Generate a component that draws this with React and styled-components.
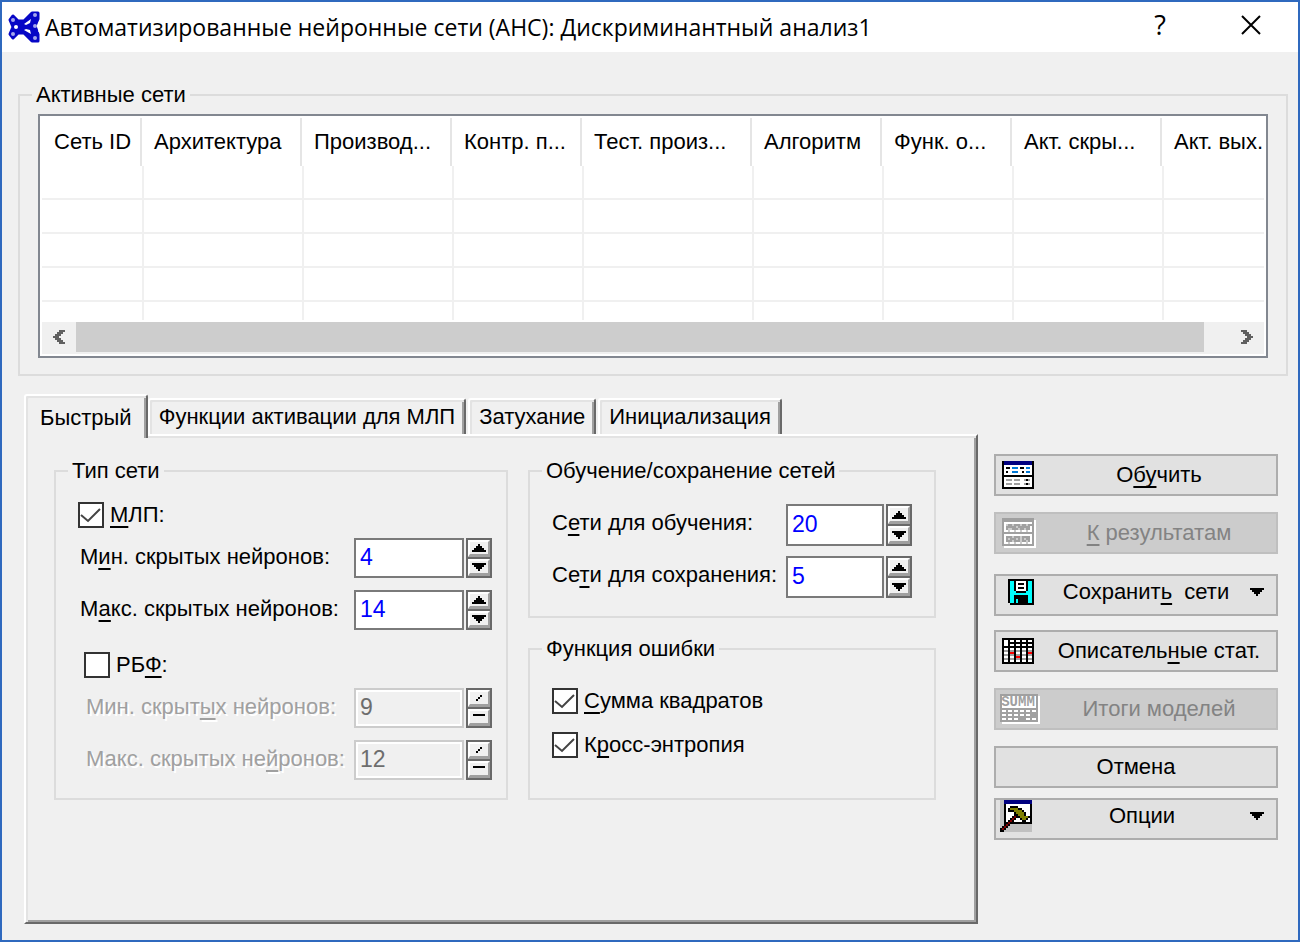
import React, { useState } from "react";
import styled, { createGlobalStyle, css } from "styled-components";

const GlobalStyle = createGlobalStyle`
  *, *::before, *::after { box-sizing: border-box; }
  body { margin: 0; background: #f0f0f0; }
  button, input { font: inherit; color: inherit; }
`;

const Window = styled.div`
  display: flex;
  flex-direction: column;
  min-height: 100vh;
  border: 2px solid #2f69be;
  background: #f0f0f0;
  color: #000;
  font: 22px/24px "Liberation Sans", Arial, sans-serif;
`;

const TitleBar = styled.header`
  display: flex;
  align-items: center;
  height: 50px;
  padding: 0 23px 0 6px;
  background: #fff;
`;

const Title = styled.h1`
  flex: 1;
  margin: 0 0 0 5px;
  font: 400 23px/32px "Open Sans", "Noto Sans", sans-serif;
  white-space: nowrap;
`;

const CaptionButton = styled.button`
  display: flex;
  align-items: center;
  justify-content: center;
  width: 48px;
  height: 48px;
  margin-left: 43px;
  padding: 0 0 4px;
  border: 0;
  background: none;
  font: 400 27px/32px "Open Sans", "Noto Sans", sans-serif;
`;

const Group = styled.fieldset`
  min-width: 0;
  margin: 0;
  padding: 0;
  border: 2px solid #dcdcdc;
`;

const Legend = styled.legend`
  margin-left: 12px;
  padding: 0 4px;
  line-height: 24px;
`;

const GroupBody = styled.div`
  padding: ${(p) => p.$pad};
`;

const Networks = styled.section`
  padding: 31px 10px 0 16px;
`;

const ListView = styled.div`
  padding: 2px;
  border: 2px solid #828790;
  background: #fff;
`;

const ListScroll = styled.div`
  height: 202px;
  overflow: hidden;
`;

const Table = styled.table`
  table-layout: fixed;
  width: 100%;
  border-spacing: 0;
`;

const HeadCell = styled.th`
  height: 48px;
  padding: 0 0 0 12px;
  border-right: 2px solid #e5e5e5;
  font-weight: 400;
  text-align: left;
  white-space: nowrap;
  &:last-child { border-right: 0; }
`;

const Cell = styled.td`
  height: 34px;
  padding: 0;
  border-bottom: 2px solid #f0f0f0;
  border-left: 2px solid #f0f0f0;
  &:first-child { border-left: 0; }
`;

const ScrollBar = styled.div`
  display: flex;
  height: 32px;
  margin-top: 2px;
  background: #f0f0f0;
`;

const ScrollArrow = styled.button`
  display: flex;
  align-items: center;
  justify-content: center;
  width: 34px;
  padding: 0 0 2px;
  border: 0;
  background: none;
`;

const Track = styled.div`
  flex: 1;
  padding: 0 26px 2px 0;
`;

const Thumb = styled.div`
  height: 100%;
  background: #cdcdcd;
`;

const Body = styled.div`
  display: flex;
  flex: 1;
  gap: 16px;
  padding: 18px 20px 16px 22px;
`;

const TabArea = styled.div`
  display: flex;
  flex: 1;
  flex-direction: column;
  min-width: 0;
`;

const bevel = css`
  border: 2px solid #fff;
  border-right-color: #696969;
  box-shadow: inset 2px 2px #e3e3e3, inset -2px 0 #a0a0a0;
`;

const TabStrip = styled.div`
  display: flex;
  align-items: flex-end;
  height: 40px;
`;

const Tab = styled.button`
  ${bevel}
  height: 36px;
  margin-right: 2px;
  padding: 0 9px;
  border-bottom: 0;
  border-radius: 3px 3px 0 0;
  background: #f0f0f0;
  white-space: nowrap;
  ${(p) => p.$active && css`
    z-index: 1;
    align-self: flex-start;
    height: 44px;
    margin-right: 0;
    padding: 2px 14px 0;
  `}
`;

const Panel = styled.div`
  display: grid;
  flex: 1;
  grid-template-columns: minmax(0, 454fr) minmax(0, 408fr);
  gap: 20px;
  align-content: start;
  padding: 23px 40px 20px 28px;
  border: 2px solid #fff;
  border-right-color: #696969;
  border-bottom-color: #696969;
  box-shadow: inset 2px 2px #e3e3e3, inset -2px -2px #a0a0a0;
`;

const Column = styled.div`
  display: flex;
  flex-direction: column;
  gap: 19px;
  & > :last-child { flex: 1; }
`;

const Stack = styled.div`
  display: flex;
  flex-direction: column;
  gap: ${(p) => p.$gap}px;
  padding-left: ${(p) => p.$indent || 0}px;
  margin-top: ${(p) => p.$top || 0}px;
`;

const Field = styled.div`
  display: flex;
  align-items: stretch;
  height: ${(p) => p.$height}px;
`;

const FieldLabel = styled.label`
  flex: 1;
  padding: 7px 0 0 2px;
  white-space: nowrap;
  ${(p) => p.$disabled && css`
    color: #a0a0a0;
    text-shadow: 2px 2px #fff;
  `}
`;

const NumberBox = styled.input`
  width: ${(p) => p.$width}px;
  padding: 0 4px 3px;
  border: 2px solid #7a7a7a;
  border-radius: 0;
  background: #fff;
  color: #00f;
  font-size: 23px;
  &:disabled {
    border-color: #ccc;
    outline: 2px solid #fff;
    outline-offset: -4px;
    background: #f0f0f0;
    color: #6d6d6d;
  }
`;

const Spinner = styled.div`
  display: flex;
  flex-direction: column;
  gap: 2px;
  width: 26px;
  margin-left: 2px;
  border: 2px solid #696969;
  background: #696969;
`;

const SpinButton = styled.button`
  display: flex;
  flex: 1;
  align-items: center;
  justify-content: center;
  min-height: 0;
  padding: 0;
  border: 2px solid #fff;
  border-right-color: #a0a0a0;
  border-bottom: 3px solid #a0a0a0;
  background: #f0f0f0;
`;

const CheckLabel = styled.label`
  display: flex;
  align-items: center;
  height: 26px;
  gap: 6px;
  white-space: nowrap;
`;

const CheckBox = styled.input`
  flex: none;
  width: 26px;
  height: 26px;
  margin: 0;
  border: 2px solid #333;
  background: #fff;
  appearance: none;
  &:checked {
    background: #fff
      url("data:image/svg+xml,%3Csvg xmlns='http://www.w3.org/2000/svg' viewBox='0 0 22 22'%3E%3Cpath d='M1 11l7 6L20 5' fill='none' stroke='%23444' stroke-width='2'/%3E%3C/svg%3E")
      center / 22px 22px no-repeat;
  }
`;

const Actions = styled.aside`
  display: flex;
  flex: none;
  flex-direction: column;
  width: 284px;
  padding-top: 60px;
`;

const ActionButton = styled.button`
  display: flex;
  align-items: center;
  height: 42px;
  margin-bottom: ${(p) => p.$after || 16}px;
  padding: 0 0 ${(p) => (p.$drop ? 6 : 0)}px;
  border: 2px solid #adadad;
  background: #e1e1e1;
  white-space: pre;
  &:disabled {
    border-color: #bfbfbf;
    background: #ccc;
    color: #838383;
  }
`;

const IconSlot = styled.span`
  display: flex;
  flex: none;
  width: ${(p) => p.$width || 46}px;
  padding-left: ${(p) => p.$left}px;
`;

const Caption = styled.span`
  flex: 1;
  text-align: center;
`;

const ArrowSlot = styled.span`
  display: flex;
  flex: none;
  width: 26px;
`;

const Hot = styled.u`
  text-decoration-thickness: 2px;
  text-underline-offset: 4px;
  text-decoration-skip-ink: none;
`;

const Drawing = styled.svg`
  display: block;
  flex: none;
`;

const palette = {
  K: "#000", W: "#fff", N: "#000080", B: "#0078d7", G: "#a0a0a0", S: "#c0c0c0",
  C: "#00ffff", R: "#ff0000", D: "#800000", O: "#808000", E: "#606060", L: "#cccccc",
};

function Pixels({ rows, shadow }) {
  const w = Math.max(...rows.map((r) => r.length)) + (shadow ? 1 : 0);
  const h = rows.length + (shadow ? 1 : 0);
  const cells = [];
  rows.forEach((row, y) =>
    [...row].forEach((c, x) => {
      if (palette[c]) cells.push(<rect key={`${x}-${y}`} x={x} y={y} width="1" height="1" fill={palette[c]} />);
    })
  );
  return (
    <Drawing width={w * 2} height={h * 2} viewBox={`0 0 ${w} ${h}`} shapeRendering="crispEdges" aria-hidden="true">
      {shadow && <rect x="1" y="1" width={w - 1} height={h - 1} fill="#fff" />}
      {cells}
    </Drawing>
  );
}

const art = {
  train: [
    "KNNNNNNNNNNNNNNK", "KNNNNNNNNNNNNNNK", "KWWWWWWWWWWWWWWK", "KWKKWBBBWKKWBBWK",
    "KWWWWWWWWWWWWWWK", "KWKWWBBBWWKWBBWK", "KWWWWWWWWWWWWWWK", "KKKKKKKKKKKKKKKK",
    "KWWWWWWWWWWWWWWK", "KWGGGWGGGWWGKGWK", "KWWWWWWWWWWWWWWK", "KWGGGWGGGWWGKGWK",
    "KWWWWWWWWWWWWWWK", "KKKKKKKKKKKKKKKK",
  ],
  results: [
    "GGGGGGGGGGGGGGGG", "GGGGGGGGGGGGGGGG", "GWWWWWWWWWWWWWWG", "GWLGGLGGGLGGLGGG",
    "GWGGGGGLGGGGGGWG", "GWGLLGGGLGGLGGWG", "GWWLWWLWWLWWLWWG", "GGGGGGGGGGGGGGGG",
    "GWWWWWWWWWWWWWWG", "GWGGGLGGGLGGGGWG", "GWGLGGGLGLGLGGWG", "GWGGGLGGGLGGLGWG",
    "GWWLWWLWWLWWLWWG", "GGGGGGGGGGGGGGGG",
  ],
  save: [
    "KKKKKKKKKKKKK", "KCCKWWWWWKCCK", "KCCKWKKKWKCCK", "KCCKWWWWWKCCK", "KCCKWKKKWKCCK",
    "KCCKWWWWWKCCK", "KCCCKKKKKCCCK", "KCCCCCCCCCCCK", "KCCKKKKKKKCCK", "KCCKKKKKKKCCK",
    "KCCKCKKKKKCCK", "KCCKCKKKKKCCK", ".KKKKKKKKKKKK",
  ],
  stats: [
    "KKKKKKKKKKKKKKKK", "KWWKWWKWWKWWKWWK", "KWWKKKKKKKKKKKKK", "KWWKWWKWWKWWKWWK",
    "KKKKKKKKKKKKKKKK", "KWWKWWKWWKWWKWWK", "KGGKGGKGGKGGKGGK", "KWWKRRKWWKWWKRRK",
    "KGGKGGKGGKGGKGGK", "KWWKWWKRRKWWKWWK", "KGGKGGKGGKGGKGGK", "KWWKWWKWWKWWKWWK",
    "KKKKKKKKKKKKKKKK",
  ],
  options: [
    "SSNNNNNNNNNNNNNN", "SSNNNNNNNNNNNNNN", "SSKWWWWWWWWWWWWK", "SSKWWKKKKWWWWWWK",
    "SSKWKOOOOKKWWWWK", "SSKWKKKOOOOKWWWK", "SSKWWWWKOOOOKWWK", "SSKWWWWKKOOOKWWK",
    "SSKWWWKDKKOOOOKK", "SSKWWKDKWWKOOKWK", "SSKWKDKWWWWKKWWK", "SSKKDKKKKKKKKKKK",
    "SSKDKSSSSSSSSSSS", "SKDKSSSSSSSSSSSS", "KDKSSSSSSSSSSSSS", "KKSSSSSSSSSSSSSS",
  ],
  up: ["...K...", "..KKK..", ".KKKKK.", "KKKKKKK"],
  down: ["KKKKKKK", ".KKKKK.", "..KKK..", "...K..."],
  slash: ["..K", ".K.", "K.."],
  dash: ["KKKKKK", "......", "......"],
  left: ["...EEE", "..EEE.", ".EEE..", "EEE...", ".EEE..", "..EEE.", "...EEE"],
  right: ["EEE...", ".EEE..", "..EEE.", "...EEE", "..EEE.", ".EEE..", "EEE..."],
};

function AppLogo() {
  return (
    <Drawing width="32" height="32" viewBox="0 0 32 32" aria-hidden="true">
      <g fill="#0606c6" stroke="#0606c6" strokeWidth="3" strokeLinejoin="round">
        <path d="M5 5L10 10L16 10L24 2H30V8L27 15L30 23V30H24L16 22L10 22L5 27L2 23L5 16L2 9Z" />
      </g>
      <g fill="#a4a6ec">
        <circle cx="5" cy="9" r="2" /><circle cx="5" cy="23" r="2" />
        <circle cx="27" cy="4" r="2" /><circle cx="27" cy="15" r="2" /><circle cx="27" cy="27" r="2" />
      </g>
      <circle cx="8" cy="16" r="2" fill="#fff" />
      <path d="M0 12L3 16L0 20ZM32 9L30 12L32 14ZM32 17L30 20L32 23Z" fill="#fff" />
      <path d="M16 13L23 8L22 12L18 14ZM16 19L23 23L22 19L18 18Z" fill="#fff" />
    </Drawing>
  );
}

function SummaryIcon() {
  const dashes = [];
  [8, 10, 12].forEach((y) =>
    [1, 4, 7, 10, 13, 16].forEach((x) => {
      if (!(x === 16 && y === 10) && !(x === 10 && y === 12)) dashes.push(<rect key={`${x}-${y}`} x={x} y={y} width="2" height="1" />);
    })
  );
  return (
    <Drawing width="40" height="30" viewBox="0 0 20 15" aria-hidden="true">
      <path d="M1 1h19v14H1z" fill="#fff" />
      <path d="M0 0h19v14H0z" fill="#a0a0a0" />
      <path d="M1 1h17v6H1z" fill="#fff" />
      <g fill="#fff">{dashes}</g>
      <text x="9" y="6" textAnchor="middle" fontFamily="Liberation Mono, monospace" fontWeight="700" fontSize="7" fill="#a0a0a0">SUMM</text>
    </Drawing>
  );
}

const columns = [
  ["Сеть ID", 100], ["Архитектура", 160], ["Производ...", 150], ["Контр. п...", 130],
  ["Тест. произ...", 170], ["Алгоритм", 130], ["Функ. о...", 130], ["Акт. скры...", 150], ["Акт. вых."],
];

function NetworkList() {
  return (
    <ListView>
      <ListScroll>
        <Table>
          <colgroup>{columns.map(([name, width]) => <col key={name} width={width} />)}</colgroup>
          <thead>
            <tr>{columns.map(([name]) => <HeadCell key={name} scope="col">{name}</HeadCell>)}</tr>
          </thead>
          <tbody>
            {[0, 1, 2, 3, 4].map((row) => (
              <tr key={row}>{columns.map(([name]) => <Cell key={name} />)}</tr>
            ))}
          </tbody>
        </Table>
      </ListScroll>
      <ScrollBar>
        <ScrollArrow type="button" aria-label="Влево"><Pixels rows={art.left} /></ScrollArrow>
        <Track><Thumb /></Track>
        <ScrollArrow type="button" aria-label="Вправо"><Pixels rows={art.right} /></ScrollArrow>
      </ScrollBar>
    </ListView>
  );
}

function NumberField({ id, label, initial, width = 110, height = 40, disabled }) {
  const [value, setValue] = useState(initial);
  const step = (d) => setValue((v) => String(Number(v) + d));
  return (
    <Field $height={height}>
      <FieldLabel htmlFor={id} $disabled={disabled}>{label}</FieldLabel>
      <NumberBox id={id} type="text" inputMode="numeric" $width={width} disabled={disabled}
        value={value} onChange={(e) => setValue(e.target.value)} />
      <Spinner>
        <SpinButton type="button" aria-label="Больше" disabled={disabled} onClick={() => step(1)}>
          <Pixels rows={disabled ? art.slash : art.up} />
        </SpinButton>
        <SpinButton type="button" aria-label="Меньше" disabled={disabled} onClick={() => step(-1)}>
          <Pixels rows={disabled ? art.dash : art.down} />
        </SpinButton>
      </Spinner>
    </Field>
  );
}

function Check({ children, checked }) {
  return (
    <CheckLabel>
      <CheckBox type="checkbox" defaultChecked={checked} />
      <span>{children}</span>
    </CheckLabel>
  );
}

function GroupBox({ title, pad, children }) {
  return (
    <Group>
      <Legend>{title}</Legend>
      <GroupBody $pad={pad}>{children}</GroupBody>
    </Group>
  );
}

function Action({ icon, left = 6, slot, after, drop, disabled, children }) {
  return (
    <ActionButton type="button" $after={after} $drop={drop} disabled={disabled}>
      {icon && <IconSlot $left={left} $width={slot}>{icon}</IconSlot>}
      <Caption>{children}</Caption>
      {drop && <ArrowSlot><Pixels rows={art.down} /></ArrowSlot>}
    </ActionButton>
  );
}

export default function App() {
  return (
    <>
      <GlobalStyle />
      <Window>
        <TitleBar>
          <AppLogo />
          <Title>Автоматизированные нейронные сети (АНС): Дискриминантный анализ1</Title>
          <CaptionButton type="button" aria-label="Справка">?</CaptionButton>
          <CaptionButton type="button" aria-label="Закрыть">
            <Drawing width="20" height="20" viewBox="0 0 20 20" aria-hidden="true">
              <path d="M1 1L19 19M19 1L1 19" stroke="#000" strokeWidth="2" />
            </Drawing>
          </CaptionButton>
        </TitleBar>

        <Networks>
          <GroupBox title="Активные сети" pad="7px 18px 16px">
            <NetworkList />
          </GroupBox>
        </Networks>

        <Body>
          <TabArea>
            <TabStrip role="tablist">
              <Tab type="button" role="tab" aria-selected="true" $active>Быстрый</Tab>
              <Tab type="button" role="tab" aria-selected="false">Функции активации для МЛП</Tab>
              <Tab type="button" role="tab" aria-selected="false">Затухание</Tab>
              <Tab type="button" role="tab" aria-selected="false">Инициализация</Tab>
            </TabStrip>
            <Panel role="tabpanel">
              <GroupBox title="Тип сети" pad="19px 14px 18px 22px">
                <Stack $gap={10}>
                  <Check checked><Hot>М</Hot>ЛП:</Check>
                  <Stack $gap={12}>
                    <NumberField id="mlp-min" label={<>М<Hot>и</Hot>н. скрытых нейронов:</>} initial="4" />
                    <NumberField id="mlp-max" label={<>М<Hot>а</Hot>кс. скрытых нейронов:</>} initial="14" />
                  </Stack>
                </Stack>
                <Stack $gap={10} $top={22} $indent={6}>
                  <Check>РБ<Hot>Ф</Hot>:</Check>
                  <Stack $gap={12}>
                    <NumberField id="rbf-min" label={<>Мин. скрыт<Hot>ы</Hot>х нейронов:</>} initial="9" disabled />
                    <NumberField id="rbf-max" label={<>Макс. скрытых не<Hot>й</Hot>ронов:</>} initial="12" disabled />
                  </Stack>
                </Stack>
              </GroupBox>
              <Column>
                <GroupBox title="Обучение/сохранение сетей" pad="21px 22px 18px 20px">
                  <Stack $gap={10}>
                    <NumberField id="train" label={<>С<Hot>е</Hot>ти для обучения:</>} initial="20" width={98} height={42} />
                    <NumberField id="keep" label={<>Се<Hot>т</Hot>и для сохранения:</>} initial="5" width={98} height={42} />
                  </Stack>
                </GroupBox>
                <GroupBox title="Функция ошибки" pad="27px 22px 18px">
                  <Stack $gap={18}>
                    <Check checked><Hot>С</Hot>умма квадратов</Check>
                    <Check checked>К<Hot>р</Hot>осс-энтропия</Check>
                  </Stack>
                </GroupBox>
              </Column>
            </Panel>
          </TabArea>

          <Actions>
            <Action icon={<Pixels rows={art.train} />}>О<Hot>бу</Hot>чить</Action>
            <Action icon={<Pixels rows={art.results} shadow />} after={20} disabled><Hot>К</Hot> результатам</Action>
            <Action icon={<Pixels rows={art.save} />} left={12} after={14} drop>Сохранит<Hot>ь</Hot>  сети</Action>
            <Action icon={<Pixels rows={art.stats} />}>Описатель<Hot>н</Hot>ые стат.</Action>
            <Action icon={<SummaryIcon />} left={4} disabled>Итоги моделей</Action>
            <Action after={10}>Отмена</Action>
            <Action icon={<Pixels rows={art.options} />} left={4} slot={38} drop>Опции</Action>
          </Actions>
        </Body>
      </Window>
    </>
  );
}
